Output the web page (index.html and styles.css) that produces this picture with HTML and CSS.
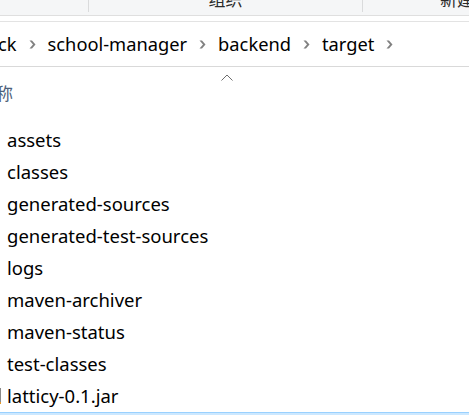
FILE: index.html
```html
<!DOCTYPE html>
<html lang="zh-CN">
<head>
<meta charset="utf-8">
<title>target</title>
<link rel="stylesheet" href="styles.css">
</head>
<body>
<div class="window">
  <div class="toolbar">
    <div class="tb-group tb-first"></div>
    <div class="tb-group tb-mid"><span class="tb-label">组织</span></div>
    <div class="tb-group tb-last"><span class="tb-label">新建</span></div>
  </div>
  <div class="spacer"></div>
  <div class="address">
    <span class="crumb crumb-cut">ck</span>
    <span class="chev"><svg width="7" height="9" viewBox="0 0 7 9"><path d="M0.5 0.5 L3 0.5 L6.5 4.5 L3 8.5 L0.5 8.5 L4 4.5 Z" fill="#808080"/></svg></span>
    <span class="crumb">school-manager</span>
    <span class="chev"><svg width="7" height="9" viewBox="0 0 7 9"><path d="M0.5 0.5 L3 0.5 L6.5 4.5 L3 8.5 L0.5 8.5 L4 4.5 Z" fill="#808080"/></svg></span>
    <span class="crumb">backend</span>
    <span class="chev"><svg width="7" height="9" viewBox="0 0 7 9"><path d="M0.5 0.5 L3 0.5 L6.5 4.5 L3 8.5 L0.5 8.5 L4 4.5 Z" fill="#808080"/></svg></span>
    <span class="crumb">target</span>
    <span class="chev"><svg width="7" height="9" viewBox="0 0 7 9"><path d="M0.5 0.5 L3 0.5 L6.5 4.5 L3 8.5 L0.5 8.5 L4 4.5 Z" fill="#808080"/></svg></span>
  </div>
  <div class="header">
    <div class="sort"><svg width="12" height="7" viewBox="0 0 12 7"><path d="M0.5 6.5 L6 1 L11.5 6.5" fill="none" stroke="#6d6d6d" stroke-width="1"/></svg></div>
    <div class="col-name">名称</div>
  </div>
  <ul class="files">
    <li class="row">assets</li>
    <li class="row">classes</li>
    <li class="row">generated-sources</li>
    <li class="row">generated-test-sources</li>
    <li class="row">logs</li>
    <li class="row">maven-archiver</li>
    <li class="row">maven-status</li>
    <li class="row">test-classes</li>
    <li class="row row-file"><span class="icon-edge"></span>latticy-0.1.jar</li>
    <li class="row row-selected"></li>
  </ul>
</div>
</body>
</html>
```

FILE: styles.css
```css
html, body {
  margin: 0;
  padding: 0;
  background: #ffffff;
}
body {
  width: 469px;
  height: 415px;
  overflow: hidden;
  font-family: "Noto Sans", "Noto Sans CJK SC", sans-serif;
  color: #000;
}
.window {
  width: 469px;
  height: 415px;
  overflow: hidden;
}
.toolbar {
  height: 15px;
  background: #f5f6f7;
  border-bottom: 1px solid #dfdfdf;
  display: flex;
  overflow: hidden;
}
.tb-group {
  height: 12px;
  display: flex;
  justify-content: center;
  flex-shrink: 0;
}
.tb-first {
  width: 88px;
  border-right: 1px solid #dadbdc;
}
.tb-mid {
  width: 273px;
  border-right: 1px solid #dadbdc;
}
.tb-last {
  flex: 1 1 auto;
  justify-content: flex-start;
  padding-left: 77px;
  overflow: hidden;
}
.tb-label {
  font-family: "Noto Sans CJK SC", sans-serif;
  font-size: 17px;
  line-height: 17px;
  margin-top: -10px;
  color: #2b2b2b;
  white-space: nowrap;
}
.spacer {
  height: 5px;
}
.address {
  height: 44px;
  border-top: 1px solid #e3e3e3;
  border-bottom: 1px solid #d9d9d9;
  display: flex;
  align-items: center;
  margin-left: -2px;
  white-space: nowrap;
}
.crumb {
  font-size: 18.3px;
  line-height: 44px;
  color: #000;
}
.chev {
  display: flex;
  align-items: center;
  padding: 0 12px;
  height: 44px;
}
.chev svg {
  display: block;
}
.header {
  height: 57px;
}
.sort {
  display: flex;
  justify-content: center;
  padding-top: 7px;
  padding-right: 16px;
  height: 7px;
}
.sort svg {
  display: block;
}
.col-name {
  font-family: "Noto Sans CJK SC", sans-serif;
  font-size: 17px;
  line-height: 20px;
  margin-top: 2px;
  margin-left: -21px;
  color: #4c607a;
}
.files {
  list-style: none;
  margin: 0;
  padding: 0;
}
.row {
  height: 32px;
  line-height: 32px;
  padding-left: 7px;
  font-size: 18.5px;
  position: relative;
  white-space: nowrap;
}
.icon-edge {
  position: absolute;
  left: 0;
  top: 8px;
  width: 1px;
  height: 14px;
  background: #8a8a8a;
  border-bottom: 2px solid #e39a2e;
}
.row-selected {
  background: #cce8ff;
  border-top: 1px solid #99d1ff;
}
```
